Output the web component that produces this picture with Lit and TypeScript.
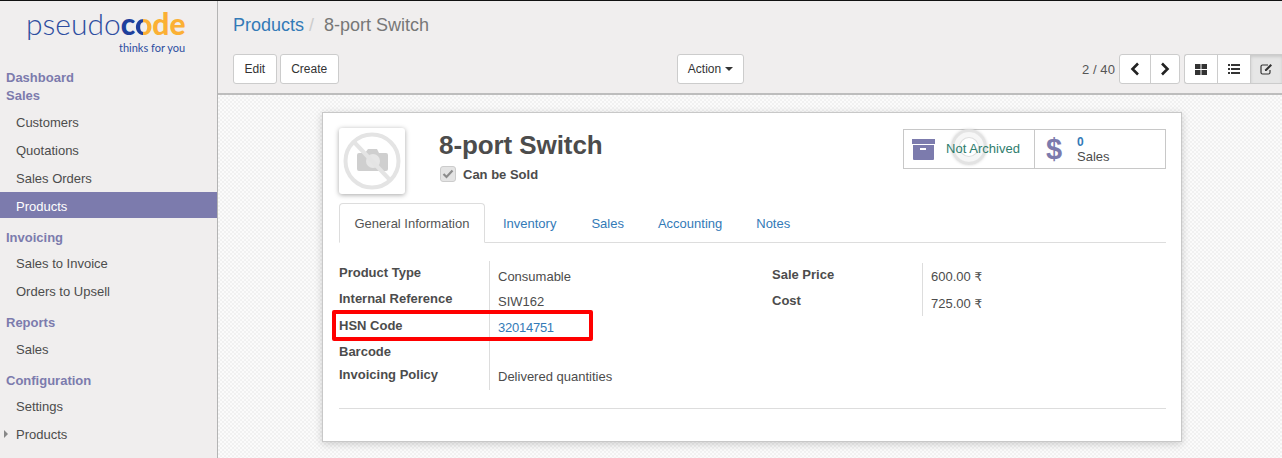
import { LitElement, html, css } from "lit";
import { customElement } from "lit/decorators.js";

const labels: [string, number][] = [
  ["Product Type", 26],
  ["Internal Reference", 27],
  ["HSN Code", 26],
  ["Barcode", 23],
  ["Invoicing Policy", 22],
];
const values: [string, number, boolean][] = [
  ["Consumable", 25, false],
  ["SIW162", 26, false],
  ["32014751", 49, true],
  ["Delivered quantities", 20, false],
];

@customElement("app-root")
export class AppRoot extends LitElement {
  static styles = css`
    :host { display: block; width: 1282px; height: 458px; overflow: hidden; font-family: "Liberation Sans", Arial, sans-serif; font-size: 13px; color: #4c4c4c; background: #f0eeee; }
    * { box-sizing: border-box; }
    .app { display: flex; height: 458px; border-top: 1px solid #111; }
    .side { width: 218px; flex: none; background: #f0eeee; border-right: 1px solid #b4b4b4; display: flex; flex-direction: column; }
    .logo { height: 67px; padding: 8px 0 0 26px; }
    .logo-word { font-family: "Lato", sans-serif; font-weight: 300; font-size: 30px; line-height: 28px; color: #2d4da0; white-space: nowrap; }
    .logo-word b { font-weight: 900; }
    .c1 { color: #1f3f9c; }
    .c2 { background: linear-gradient(90deg, #1f3f9c 50%, #fbb034 50%); -webkit-background-clip: text; background-clip: text; color: transparent; }
    .c3 { color: #fbb034; }
    .tag { font-family: "Lato", sans-serif; font-size: 11px; line-height: 13px; color: #2d4da0; margin: 4px 0 0 93px; white-space: nowrap; }
    .head { font-weight: 700; color: #7c7bad; line-height: 18px; padding-left: 6px; }
    .item { height: 26px; line-height: 29px; padding-left: 16px; margin-bottom: 2px; position: relative; }
    .item.on { background: #7c7bad; color: #fff; }
    .caret { position: absolute; left: 4px; top: 10px; width: 0; height: 0; border-left: 4px solid #888; border-top: 4px solid transparent; border-bottom: 4px solid transparent; }
    .g1 { height: 1px; flex: none; } .g2 { height: 2px; flex: none; } .g3 { height: 3px; flex: none; } .g9 { height: 9px; flex: none; }
    .main { flex: 1; display: flex; flex-direction: column; min-width: 0; }
    .cp { height: 94px; background: #f0eeee; border-bottom: 2px solid #bdbdbd; padding: 0 0 0 15px; flex: none; }
    .crumbs { font-size: 18px; line-height: 20px; padding-top: 14px; height: 53px; white-space: nowrap; }
    .crumbs a { color: #337ab7; }
    .crumbs .sep { color: #ccc; padding: 0 10px 0 5px; }
    .crumbs .cur { color: #777; }
    .bar { display: grid; grid-template-columns: 444px 67px 1fr; align-items: center; height: 30px; }
    .btns { display: flex; gap: 3px; }
    .btn { height: 30px; background: #fff; border: 1px solid #ccc; border-radius: 3px; padding: 0 10.5px; font-size: 12px; line-height: 28px; color: #333; white-space: nowrap; }
    .action { display: flex; align-items: center; gap: 4px; justify-content: center; padding: 0; }
    .dn { width: 0; height: 0; border-top: 4px solid #333; border-left: 4px solid transparent; border-right: 4px solid transparent; }
    .right { display: flex; justify-content: flex-end; align-items: center; }
    .pager { font-size: 13px; margin-right: 4px; letter-spacing: 0.1px; color: #555; }
    .group { display: flex; height: 30px; background: #fff; border: 1px solid #ccc; border-radius: 3px; overflow: hidden; }
    .group.nav { margin-right: 4px; }
    .cell { display: flex; align-items: center; justify-content: center; height: 28px; border-left: 1px solid #ccc; }
    .cell:first-child { border-left: 0; }
    .nav .cell { width: 29.5px; }
    .views { border-right: 0; border-radius: 3px 0 0 3px; }
    .views .cell { width: 32.33px; }
    .views .cell.on { background: #e6e6e6; box-shadow: inset 0 2px 3px rgba(0,0,0,.12); }
    .sheet-bg { flex: 1; padding: 17px 100px 0 104px; background-color: #fbfbfb; background-image: conic-gradient(#f1f1f1 25%, transparent 0 50%, #f1f1f1 0 75%, transparent 0); background-size: 4px 4px; }
    .sheet { width: 860px; height: 330px; background: #fff; border: 1px solid #c8c8c8; box-shadow: 0 2px 8px rgba(0,0,0,.18); padding: 15px 15px 0 16px; position: relative; }
    .top { display: flex; height: 75px; position: relative; }
    .pic { width: 66px; height: 66px; flex: none; background: #fff; border-radius: 3px; box-shadow: 0 1px 5px rgba(0,0,0,.35); display: flex; align-items: center; justify-content: center; }
    .name { margin-left: 34px; }
    h1 { margin: 0; font-size: 26px; line-height: 34px; font-weight: 700; color: #4c4c4c; white-space: nowrap; letter-spacing: -0.08px; }
    .sold { display: flex; align-items: center; gap: 7px; margin: 4px 0 0 1px; font-weight: 700; height: 16px; }
    .chk { width: 16px; height: 16px; background: #e4e4e4; border: 1px solid #ccc; border-radius: 3px; display: flex; align-items: center; justify-content: center; }
    .stats { position: absolute; left: 564px; top: 1px; width: 263px; height: 40px; display: flex; border: 1px solid #c8c8c8; background: #fff; }
    .stat { width: 130px; display: flex; align-items: center; position: relative; }
    .stat + .stat { border-left: 1px solid #c8c8c8; width: 131px; }
    .arch { margin-left: 8px; }
    .na { margin: -2px 0 0 11px; color: #2f7d6d; white-space: nowrap; position: relative; z-index: 1; letter-spacing: 0.03px; }
    .dollar { font-size: 29px; font-weight: 700; color: #7c7bad; margin-left: 11px; width: 31px; line-height: 38px; }
    .st2 { line-height: 14px; }
    .st2 b { color: #337ab7; font-size: 12px; display: block; line-height: 15px; }
    .ripple { position: absolute; left: 47px; top: -1px; width: 36px; height: 36px; border-radius: 50%; border: 3px solid rgba(222,222,222,.85); box-shadow: inset 0 0 0 5px rgba(255,255,255,.7), inset 0 0 0 6px rgba(215,215,215,.8), 0 0 3px rgba(0,0,0,.15); pointer-events: none; }
    .tabs { display: flex; height: 40px; border-bottom: 1px solid #ddd; width: 827px; }
    .tab { padding: 0 17px; line-height: 42px; color: #337ab7; white-space: nowrap; }
    .tab.on { color: #555; background: #fff; border: 1px solid #ddd; border-bottom-color: #fff; border-radius: 4px 4px 0 0; height: 40px; padding: 0 14.5px; line-height: 39px; margin-right: 1px; }
    .tab.wide { padding-right: 18px; }
    .fields { display: flex; margin-top: 18px; position: relative; }
    .lab { width: 151px; border-right: 1px solid #ddd; height: 129px; padding-top: 3px; flex: none; }
    .lab div { font-weight: 700; line-height: 18px; white-space: nowrap; }
    .val { width: 282px; padding: 7px 0 0 8px; flex: none; }
    .val div { line-height: 18px; white-space: nowrap; }
    .val a { color: #337ab7; letter-spacing: -0.25px; }
    .lab2 { width: 151px; border-right: 1px solid #ddd; height: 53px; margin-top: 2px; padding-top: 3px; flex: none; }
    .lab2 div { font-weight: 700; line-height: 18px; height: 26px; }
    .val2 { padding: 7px 0 0 8px; }
    .val2 div { line-height: 18px; height: 27px; white-space: nowrap; }
    .rs { font-family: "DejaVu Sans", sans-serif; font-size: 12px; }
    .hr { border-top: 1px solid #ddd; width: 827px; margin-top: 18px; }
    .mark { position: absolute; left: -7px; top: 49px; width: 261px; height: 31px; border: 4px solid #f00; border-radius: 2px; pointer-events: none; }
  `;

  private pic() {
    return html`<svg width="60" height="60" viewBox="0 0 60 60">
      <path d="M17 22h6l3-4h9l2 4h7a2 2 0 0 1 2 2v14a2 2 0 0 1-2 2H17a2 2 0 0 1-2-2V24a2 2 0 0 1 2-2z" fill="#cfcfcf"/>
      <circle cx="31" cy="30" r="7" fill="#e6e6e6"/>
      <circle cx="30" cy="30" r="26.500" fill="none" stroke="#e4e4e4" stroke-width="4"/>
      <line x1="12" y1="11" x2="48" y2="49" stroke="#e4e4e4" stroke-width="4"/>
    </svg>`;
  }

  render() {
    return html`<div class="app">
      <aside class="side">
        <div class="logo">
          <div class="logo-word">pseudo<b><span class="c1">c</span><span class="c2">o</span><span class="c3">de</span></b></div>
          <div class="tag">thinks for you</div>
        </div>
        <div class="g1"></div>
        <div class="head">Dashboard</div>
        <div class="head">Sales</div>
        <div class="g3"></div>
        <div class="item">Customers</div>
        <div class="item">Quotations</div>
        <div class="item">Sales Orders</div>
        <div class="item on">Products</div>
        <div class="g9"></div>
        <div class="head">Invoicing</div>
        <div class="g2"></div>
        <div class="item">Sales to Invoice</div>
        <div class="item">Orders to Upsell</div>
        <div class="g9"></div>
        <div class="head">Reports</div>
        <div class="g3"></div>
        <div class="item">Sales</div>
        <div class="g9"></div>
        <div class="head">Configuration</div>
        <div class="g2"></div>
        <div class="item">Settings</div>
        <div class="item"><span class="caret"></span>Products</div>
      </aside>
      <main class="main">
        <div class="cp">
          <div class="crumbs"><a>Products</a><span class="sep">/</span><span class="cur">8-port Switch</span></div>
          <div class="bar">
            <div class="btns"><div class="btn">Edit</div><div class="btn">Create</div></div>
            <div class="btn action">Action <span class="dn"></span></div>
            <div class="right">
              <span class="pager">2 / 40</span>
              <div class="group nav">
                <div class="cell"><svg width="10" height="14" viewBox="0 0 10 14"><path d="M8 1.500 2.500 7 8 12.500" fill="none" stroke="#222" stroke-width="2.600"/></svg></div>
                <div class="cell"><svg width="10" height="14" viewBox="0 0 10 14"><path d="M2 1.500 7.500 7 2 12.500" fill="none" stroke="#222" stroke-width="2.600"/></svg></div>
              </div>
              <div class="group views">
                <div class="cell"><svg width="12" height="11" viewBox="0 0 12 11" fill="#333"><rect width="5.500" height="5"/><rect x="6.500" width="5.500" height="5"/><rect y="6" width="5.500" height="5"/><rect x="6.500" y="6" width="5.500" height="5"/></svg></div>
                <div class="cell"><svg width="12" height="10" viewBox="0 0 12 10" fill="#333"><rect width="2" height="2"/><rect x="3" width="9" height="2"/><rect y="4" width="2" height="2"/><rect x="3" y="4" width="9" height="2"/><rect y="8" width="2" height="2"/><rect x="3" y="8" width="9" height="2"/></svg></div>
                <div class="cell on"><svg width="13" height="12" viewBox="0 0 13 12"><path d="M8 2H2.500A1.500 1.500 0 0 0 1 3.500v6A1.500 1.500 0 0 0 2.500 11h6A1.500 1.500 0 0 0 10 9.500V7" fill="none" stroke="#333" stroke-width="1.200"/><path d="M5 6.500 10.500 1 12 2.500 6.500 8H5z" fill="#333"/></svg></div>
              </div>
            </div>
          </div>
        </div>
        <div class="sheet-bg">
          <div class="sheet">
            <div class="top">
              <div class="pic">${this.pic()}</div>
              <div class="name">
                <h1>8-port Switch</h1>
                <div class="sold"><span class="chk"><svg width="12" height="10" viewBox="0 0 12 10"><path d="M1.500 5 4.500 8 10.500 1.500" fill="none" stroke="#8c8c8c" stroke-width="2.200"/></svg></span>Can be Sold</div>
              </div>
              <div class="stats">
                <div class="stat">
                  <svg class="arch" width="23" height="21" viewBox="0 0 23 21" fill="#7c7bad"><rect width="23" height="5"/><path d="M1 6h21v14a1 1 0 0 1-1 1H2a1 1 0 0 1-1-1z"/><rect x="8" y="9" width="6" height="2" fill="#fff"/></svg>
                  <span class="na">Not Archived</span>
                  <span class="ripple"></span>
                </div>
                <div class="stat">
                  <span class="dollar">$</span>
                  <div class="st2"><b>0</b>Sales</div>
                </div>
              </div>
            </div>
            <div class="tabs">
              <div class="tab on">General Information</div>
              <div class="tab wide">Inventory</div>
              <div class="tab">Sales</div>
              <div class="tab">Accounting</div>
              <div class="tab">Notes</div>
            </div>
            <div class="fields">
              <div class="lab">${labels.map(([t, h]) => html`<div style="height:${h}px">${t}</div>`)}</div>
              <div class="val">${values.map(([t, h, link]) => html`<div style="height:${h}px">${link ? html`<a>${t}</a>` : t}</div>`)}</div>
              <div class="lab2"><div>Sale Price</div><div>Cost</div></div>
              <div class="val2"><div>600.00 <span class="rs">₹</span></div><div>725.00 <span class="rs">₹</span></div></div>
              <div class="mark"></div>
            </div>
            <div class="hr"></div>
          </div>
        </div>
      </main>
    </div>`;
  }
}
